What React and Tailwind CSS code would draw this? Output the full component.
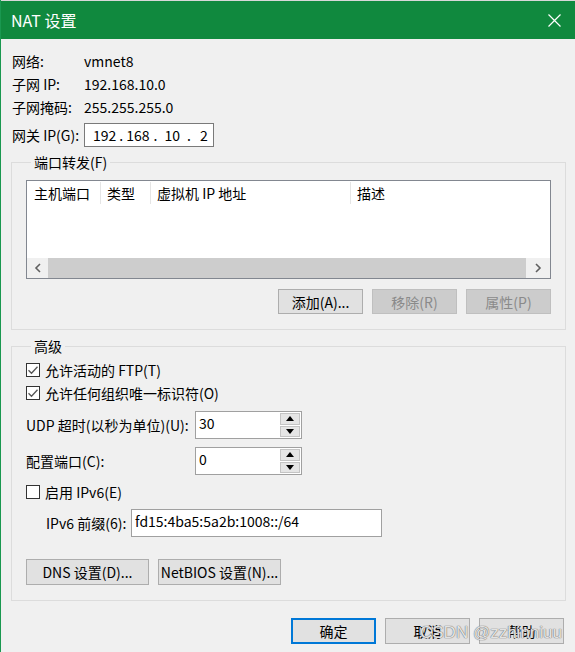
import React from "react";

const font = "font-['Noto_Sans_CJK_SC','Noto_Sans',sans-serif]";

const Button = ({ children, variant = "normal", className = "" }) => {
    const look =
        variant === "primary"
            ? "border-2 border-[#0078d7] bg-[#e1e1e1] text-black"
            : variant === "disabled"
            ? "border border-[#bfbfbf] bg-[#cccccc] text-[#8a8a8a]"
            : "border border-[#adadad] bg-[#e1e1e1] text-black";
    return (
        <div className={`flex items-center justify-center text-[14px] leading-[18px] ${look} ${className}`}>
            {children}
        </div>
    );
};

const Checkbox = ({ checked }) => (
    <div className="w-[14px] h-[14px] border border-[#333333] bg-white flex items-center justify-center shrink-0">
        {checked && (
            <svg width="12" height="12" viewBox="0 0 12 12">
                <path d="M1.5 6.2 L4.5 9.2 L10.5 2.8" stroke="#555555" strokeWidth="1.3" fill="none" />
            </svg>
        )}
    </div>
);

const Spinner = ({ value }) => (
    <div className="w-[107px] h-[28px] border border-[#a0a0a0] bg-white flex">
        <div className="flex-1 pl-[3px] pt-[2px] text-[14px] leading-[18px]">{value}</div>
        <div className="w-[21px] flex flex-col gap-[1px] py-[1px] pr-[1px]">
            <div className="flex-1 bg-[#e5e5e5] border border-[#c4c4c4] flex items-center justify-center">
                <svg width="8" height="5" viewBox="0 0 8 5">
                    <path d="M0 5 L4 0 L8 5 Z" fill="#000" />
                </svg>
            </div>
            <div className="flex-1 bg-[#e5e5e5] border border-[#c4c4c4] flex items-center justify-center">
                <svg width="8" height="5" viewBox="0 0 8 5">
                    <path d="M0 0 L8 0 L4 5 Z" fill="#000" />
                </svg>
            </div>
        </div>
    </div>
);

const Group = ({ title, children, className = "" }) => (
    <fieldset className={`ml-[10px] mr-[9px] border border-[#dcdcdc] pl-[14px] pr-[14px] pb-[15px] ${className}`}>
        <legend className="ml-[5px] px-[3px] text-[14px] leading-[16px]">{title}</legend>
        {children}
    </fieldset>
);

const InfoRow = ({ label, value }) => (
    <div className="flex items-center h-[23px] text-[14px] leading-[18px]">
        <span className="w-[72px]">{label}</span>
        <span>{value}</span>
    </div>
);

export default function App() {
    return (
        <div className={`relative w-[575px] h-[652px] bg-[#f0f0f0] border-l border-[#1a9850] overflow-hidden text-black ${font}`}>
            <div className="h-[1px] bg-[#d8d8d8]" />
            {/* title bar */}
            <div className="h-[38px] bg-[#10893e] flex items-center justify-between pl-[10px] pr-[14px]">
                <span className="text-white text-[16px] leading-[20px]">NAT 设置</span>
                <svg width="13" height="13" viewBox="0 0 13 13">
                    <path d="M0.5 0.5 L12.5 12.5 M12.5 0.5 L0.5 12.5" stroke="#ffffff" strokeWidth="1.2" />
                </svg>
            </div>

            {/* network info */}
            <div className="pl-[11px] pt-[10px]">
                <InfoRow label="网络:" value="vmnet8" />
                <InfoRow label="子网 IP:" value="192.168.10.0" />
                <InfoRow label="子网掩码:" value="255.255.255.0" />
                <div className="flex items-center mt-[5px] text-[14px] leading-[18px]">
                    <span className="w-[72px]">网关 IP(G):</span>
                    <div className="w-[130px] h-[24px] border border-[#7a7a7a] bg-white flex items-center pl-[8px]">
                        <span>192</span>
                        <span className="ml-[3px]">.</span>
                        <span className="ml-[3px]">168</span>
                        <span className="ml-[4px]">.</span>
                        <span className="ml-[7px]">10</span>
                        <span className="ml-[7px]">.</span>
                        <span className="ml-[9px]">2</span>
                    </div>
                </div>
            </div>

            {/* port forwarding */}
            <Group title="端口转发(F)" className="mt-[7px] pt-[10px]">
                <div className="h-[99px] border border-[#828790] bg-white flex flex-col">
                    <div className="h-[24px] flex text-[14px] leading-[18px]">
                        <div className="w-[74px] pl-[7px] flex items-center border-r border-[#e5e5e5] my-[1px]">主机端口</div>
                        <div className="w-[50px] pl-[6px] flex items-center border-r border-[#e5e5e5] my-[1px]">类型</div>
                        <div className="w-[200px] pl-[6px] flex items-center border-r border-[#e5e5e5] my-[1px]">虚拟机 IP 地址</div>
                        <div className="flex-1 pl-[6px] flex items-center">描述</div>
                    </div>
                    <div className="flex-1" />
                    <div className="h-[20px] bg-[#f0f0f0] flex">
                        <div className="w-[21px] flex items-center justify-center">
                            <svg width="8" height="10" viewBox="0 0 8 10">
                                <path d="M6 1 L2 5 L6 9" stroke="#606060" strokeWidth="1.6" fill="none" />
                            </svg>
                        </div>
                        <div className="flex-1 bg-[#cdcdcd]" />
                        <div className="w-[24px] flex items-center justify-center">
                            <svg width="8" height="10" viewBox="0 0 8 10">
                                <path d="M2 1 L6 5 L2 9" stroke="#606060" strokeWidth="1.6" fill="none" />
                            </svg>
                        </div>
                    </div>
                </div>
                <div className="mt-[10px] flex justify-end gap-[9px]">
                    <Button className="w-[85px] h-[25px]">添加(A)...</Button>
                    <Button variant="disabled" className="w-[85px] h-[25px]">移除(R)</Button>
                    <Button variant="disabled" className="w-[85px] h-[25px]">属性(P)</Button>
                </div>
            </Group>

            {/* advanced */}
            <Group title="高级" className="mt-[8px] pt-[4px]">
                <div className="flex items-center gap-[5px] h-[23px] text-[14px] leading-[18px]">
                    <Checkbox checked />
                    <span>允许活动的 FTP(T)</span>
                </div>
                <div className="flex items-center gap-[5px] h-[23px] text-[14px] leading-[18px]">
                    <Checkbox checked />
                    <span>允许任何组织唯一标识符(O)</span>
                </div>
                <div className="mt-[7px] flex items-center text-[14px] leading-[18px]">
                    <span className="w-[169px]">UDP 超时(以秒为单位)(U):</span>
                    <Spinner value="30" />
                </div>
                <div className="mt-[8px] flex items-center text-[14px] leading-[18px]">
                    <span className="w-[169px]">配置端口(C):</span>
                    <Spinner value="0" />
                </div>
                <div className="mt-[5px] flex items-center gap-[5px] h-[23px] text-[14px] leading-[18px]">
                    <Checkbox />
                    <span>启用 IPv6(E)</span>
                </div>
                <div className="mt-[6px] flex items-center text-[14px] leading-[18px] pl-[20px]">
                    <span className="w-[85px]">IPv6 前缀(6):</span>
                    <div className="w-[251px] h-[28px] border border-[#a0a0a0] bg-white pl-[3px] pt-[2px]">
                        fd15:4ba5:5a2b:1008::/64
                    </div>
                </div>
                <div className="mt-[22px] flex gap-[9px]">
                    <Button className="w-[123px] h-[26px]">DNS 设置(D)...</Button>
                    <Button className="w-[123px] h-[26px]">NetBIOS 设置(N)...</Button>
                </div>
            </Group>

            {/* dialog buttons */}
            <div className="mt-[17px] mr-[11px] flex justify-end gap-[9px]">
                <Button variant="primary" className="w-[85px] h-[26px]">确定</Button>
                <Button className="w-[85px] h-[26px]">取消</Button>
                <Button className="w-[85px] h-[26px]">帮助</Button>
            </div>

            {/* watermark */}
            <span className="absolute left-[419px] top-[622px] whitespace-nowrap text-[17px] leading-[22px] text-[#f4f4f4]/90 font-['Liberation_Sans',sans-serif] [text-shadow:0_0_1px_#6a6a6a,0_0_1px_#6a6a6a]">
                CSDN @zzhinniuu
            </span>
        </div>
    );
}
